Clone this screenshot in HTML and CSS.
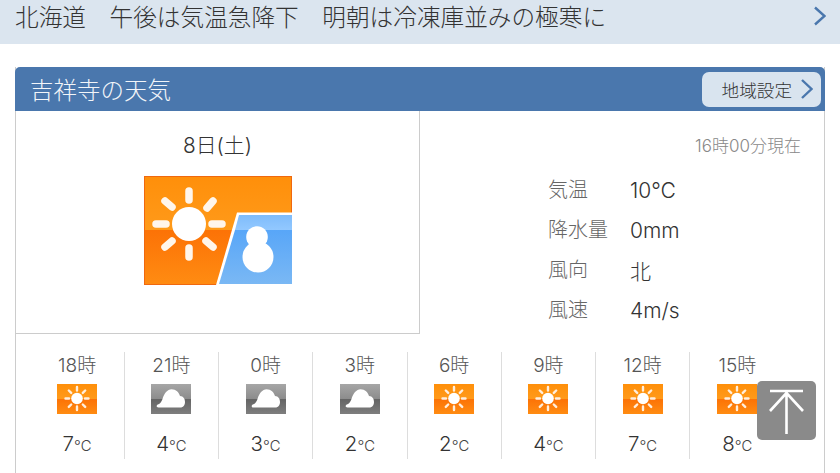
FILE: index.html
```html
<!DOCTYPE html>
<html lang="ja">
<head>
<meta charset="UTF-8">
<meta name="viewport" content="width=device-width, initial-scale=1.0">
<title>吉祥寺の天気</title>
<link rel="stylesheet" href="styles.css">
</head>
<body>
<svg class="defs" width="0" height="0">
    <defs>
        <linearGradient id="orangeTop" x1="0" y1="0" x2="0" y2="1">
            <stop offset="0" stop-color="#ff8f0a"/>
            <stop offset="1" stop-color="#ff9a1a"/>
        </linearGradient>
        <linearGradient id="orangeBottom" x1="0" y1="0" x2="0" y2="1">
            <stop offset="0" stop-color="#fc7206"/>
            <stop offset="1" stop-color="#ff8c12"/>
        </linearGradient>
        <linearGradient id="greyTop" x1="0" y1="0" x2="0" y2="1">
            <stop offset="0" stop-color="#a6a6a6"/>
            <stop offset="1" stop-color="#8c8c8c"/>
        </linearGradient>
        <linearGradient id="greyBottom" x1="0" y1="0" x2="0" y2="1">
            <stop offset="0" stop-color="#646464"/>
            <stop offset="1" stop-color="#7e7e7e"/>
        </linearGradient>
        <linearGradient id="blueTop" x1="0" y1="0" x2="0" y2="1">
            <stop offset="0" stop-color="#7fbcfb"/>
            <stop offset="1" stop-color="#92c8ff"/>
        </linearGradient>
        <linearGradient id="blueBottom" x1="0" y1="0" x2="0" y2="1">
            <stop offset="0" stop-color="#58a6f8"/>
            <stop offset="1" stop-color="#7ab8f4"/>
        </linearGradient>
        <symbol id="sunSmall" viewBox="0 0 40 30">
            <rect width="40" height="15" fill="url(#orangeTop)"/>
            <rect y="15" width="40" height="15" fill="url(#orangeBottom)"/>
            <circle cx="20" cy="14.5" r="5.8" fill="#fff"/>
            <g stroke="#ffeedd" stroke-width="2.4" stroke-linecap="round">
                <path d="M20 3v3.5M20 22.5v3.5M8.5 14.5H12M28 14.5h3.5M11.8 6.5l2.4 2.4M25.8 20.5l2.4 2.4M28.2 6.5l-2.4 2.4M14.2 20.5l-2.4 2.4"/>
            </g>
        </symbol>
        <symbol id="cloudSmall" viewBox="0 0 40 30">
            <rect width="40" height="15" fill="url(#greyTop)"/>
            <rect y="15" width="40" height="15" fill="url(#greyBottom)"/>
            <path d="M7.5 23.5C5 23.5 5.2 21 7.5 20.3 9.5 19.6 10.5 17.6 11.5 15 13 9.5 16.5 5.2 20.5 5.2 25 5.2 28 8.5 29 12 32.5 12.2 34 15 34 18 34 21.3 32 23.5 29.5 23.5Z" fill="#fff"/>
        </symbol>
    </defs>
</svg>

<a class="news" href="#">
    <span class="newsText">北海道　午後は気温急降下　明朝は冷凍庫並みの極寒に</span>
    <svg class="chevron" width="12" height="20" viewBox="0 0 12 20"><path d="M1 1.5 10.5 10 1 18.5" fill="none" stroke="#4a77ad" stroke-width="2.4"/></svg>
</a>

<section class="card">
    <header class="cardHead">
        <h1>吉祥寺の天気</h1>
        <a class="areaBtn" href="#">
            地域設定
            <svg width="12" height="20" viewBox="0 0 12 20"><path d="M1 1 10.5 10 1 19" fill="none" stroke="#4a77ad" stroke-width="2.4"/></svg>
        </a>
    </header>

    <div class="now">
        <div class="today">
            <div class="date">8日(土)</div>
            <svg class="bigIcon" width="148" height="109" viewBox="0 0 148 109">
                <rect width="148" height="54" fill="url(#orangeTop)"/>
                <rect y="54" width="148" height="55" fill="url(#orangeBottom)"/>
                <rect x=".5" y=".5" width="147" height="108" fill="none" stroke="#f0680f"/>
                <circle cx="45" cy="48" r="17" fill="#fff"/>
                <g stroke="#fff6ec" stroke-width="7.5" stroke-linecap="round">
                    <path d="M45 15v9M45 72v9M12 48h10M68 48h10M21 25l7 6M62 65l7 6M69 25l-6 7M28 65l-7 6"/>
                </g>
                <polygon points="93,36.5 148,36.5 148,109 72,109" fill="#fff"/>
                <polygon points="95,39 148,39 148,54 91,54" fill="url(#blueTop)"/>
                <polygon points="91,54 148,54 148,108 75,108" fill="url(#blueBottom)"/>
                <circle cx="113" cy="61" r="10.8" fill="#fff"/>
                <circle cx="114" cy="81" r="15.5" fill="#fff"/>
            </svg>
        </div>
        <div class="obs">
            <div class="obsTime">16時00分現在</div>
            <dl class="obsList">
                <dt>気温</dt><dd>10℃</dd>
                <dt>降水量</dt><dd>0mm</dd>
                <dt>風向</dt><dd>北</dd>
                <dt>風速</dt><dd>4m/s</dd>
            </dl>
        </div>
    </div>

    <ul class="hours">
        <li><span class="hour">18時</span><svg class="wx"><use href="#sunSmall"/></svg><span class="temp">7<small>℃</small></span></li>
        <li><span class="hour">21時</span><svg class="wx"><use href="#cloudSmall"/></svg><span class="temp">4<small>℃</small></span></li>
        <li><span class="hour">0時</span><svg class="wx"><use href="#cloudSmall"/></svg><span class="temp">3<small>℃</small></span></li>
        <li><span class="hour">3時</span><svg class="wx"><use href="#cloudSmall"/></svg><span class="temp">2<small>℃</small></span></li>
        <li><span class="hour">6時</span><svg class="wx"><use href="#sunSmall"/></svg><span class="temp">2<small>℃</small></span></li>
        <li><span class="hour">9時</span><svg class="wx"><use href="#sunSmall"/></svg><span class="temp">4<small>℃</small></span></li>
        <li><span class="hour">12時</span><svg class="wx"><use href="#sunSmall"/></svg><span class="temp">7<small>℃</small></span></li>
        <li><span class="hour">15時</span><svg class="wx"><use href="#sunSmall"/></svg><span class="temp">8<small>℃</small></span></li>
    </ul>
</section>

<a class="toTop" href="#">
    <svg width="59" height="59" viewBox="0 0 59 59"><path d="M13 10h33M29.5 11v42M13 30 29.5 12 46 30" fill="none" stroke="#fff" stroke-width="2.6"/></svg>
</a>
</body>
</html>
```

FILE: styles.css
```css
html, body {
    height: 473px;
    overflow: hidden;
}

body {
    font-family: Inter, "Noto Sans CJK JP", "Noto Sans", sans-serif;
    font-weight: 300;
    background-color: #fff;
    margin: 0;
    padding: 0;
    color: #333;
}

a {
    color: inherit;
    text-decoration: none;
}

.defs {
    position: absolute;
}

.news {
    display: flex;
    justify-content: space-between;
    align-items: center;
    height: 44px;
    padding: 0 14px 12px 15px;
    box-sizing: border-box;
    background-color: #dbe5ef;
    font-size: 23.65px;
    white-space: nowrap;
}

.card {
    margin: 23px 15px 0;
    padding-bottom: 20px;
    border-left: 1px solid #ccc;
    border-right: 1px solid #ccc;
}

.cardHead {
    display: flex;
    justify-content: space-between;
    align-items: center;
    height: 44px;
    margin: 0 -1px;
    padding: 0 4px 0 15px;
    background-color: #4a77ad;
    border-radius: 5px 5px 0 0;
}

.cardHead h1 {
    margin: 0;
    font-size: 23.5px;
    font-weight: 300;
    color: #f2f5f9;
}

.areaBtn {
    display: flex;
    align-items: center;
    justify-content: flex-end;
    gap: 9px;
    width: 119px;
    height: 35px;
    padding-right: 8px;
    box-sizing: border-box;
    background-color: #d9e4ef;
    border-radius: 7px;
    font-size: 17.6px;
}

.now {
    display: flex;
    height: 223px;
}

.today {
    display: flex;
    flex-direction: column;
    align-items: center;
    width: 403px;
    border-right: 1px solid #ccc;
    border-bottom: 1px solid #ccc;
}

.date {
    margin-top: 21px;
    height: 44px;
    font-size: 20.8px;
    line-height: 28px;
}

.bigIcon {
    display: block;
}

.obs {
    flex: 1;
}

.obsTime {
    margin: 23px 23px 0 0;
    text-align: right;
    font-size: 17px;
    line-height: 24px;
    color: #888;
}

.obsList {
    display: grid;
    grid-template-columns: 82px auto;
    grid-auto-rows: 40px;
    align-items: center;
    margin: 10px 0 0 128px;
}

.obsList dt {
    font-size: 20px;
    color: #666;
}

.obsList dd {
    margin: 0;
    padding-top: 4px;
    font-size: 21px;
    color: #333;
}

.hours {
    display: grid;
    grid-template-columns: repeat(8, 94.25px);
    margin: 18px 0 0 14.5px;
    padding: 0;
    list-style: none;
}

.hours li {
    display: flex;
    flex-direction: column;
    align-items: center;
    height: 107px;
    border-right: 1px solid #ddd;
}

.hours li:last-child {
    border-right: none;
}

.hour {
    height: 32px;
    font-size: 19px;
    line-height: 28px;
    color: #555;
}

.wx {
    display: block;
    flex: none;
    width: 40px;
    height: 30px;
}

.temp {
    margin-top: 20px;
    font-size: 20.5px;
    line-height: 20px;
    color: #333;
}

.temp small {
    font-size: 15px;
    color: #444;
}

.toTop {
    position: absolute;
    left: 757px;
    top: 381px;
    width: 59px;
    height: 59px;
    background-color: #8a8a8a;
    border-radius: 5px;
}

.toTop svg {
    display: block;
}
```
